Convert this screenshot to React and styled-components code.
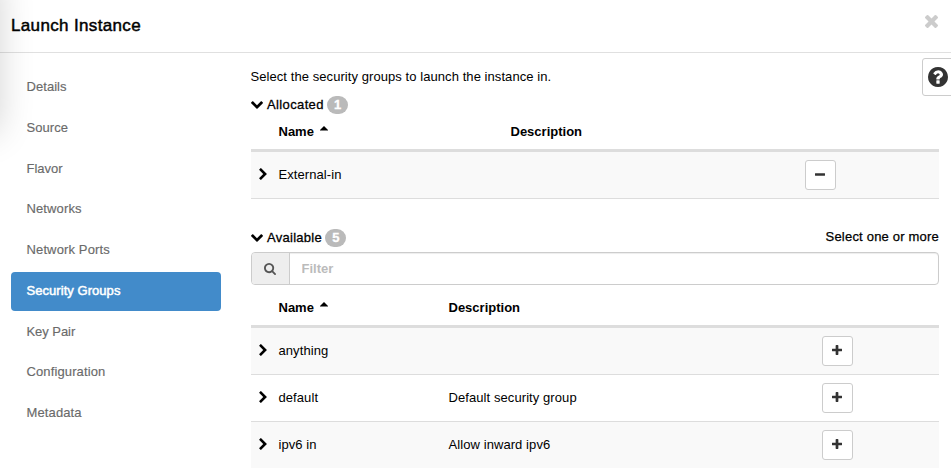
import React from "react";
import styled, { createGlobalStyle } from "styled-components";

const GlobalStyle = createGlobalStyle`
  * { box-sizing: border-box; }
  body {
    margin: 0;
    overflow: hidden;
    background: #fff;
    color: #000;
    font-family: "Liberation Sans", Arial, sans-serif;
    font-size: 13px;
    line-height: 18px;
  }
`;

const GLYPHS = {
  down: {
    box: "90 532 1612 1036",
    d: "M1683 808l-742 741q-19 19-45 19t-45-19l-742-741q-19-19-19-45.5t19-45.5l166-165q19-19 45-19t45 19l531 531 531-531q19-19 45-19t45 19l166 165q19 19 19 45.5t-19 45.5z",
  },
  right: {
    box: "346 26 1036 1612",
    d: "M1363 877l-742 742q-19 19-45 19t-45-19l-166-166q-19-19-19-45t19-45l531-531-531-531q-19-19-19-45t19-45l166-166q19-19 45-19t45 19l742 742q19 19 19 45t-19 45z",
  },
  caret: { box: "0 0 8 4.5", d: "M0 4.5L0 4 4 0l4 4v.5z" },
  times: {
    box: "302 366 1188 1188",
    d: "M1490 1322q0 40-28 68l-136 136q-28 28-68 28t-68-28l-294-294-294 294q-28 28-68 28t-68-28l-136-136q-28-28-28-68t28-68l294-294-294-294q-28-28-28-68t28-68l136-136q28-28 68-28t68 28l294 294 294-294q28-28 68-28t68 28l136 136q28 28 28 68t-28 68l-294 294 294 294q28 28 28 68z",
  },
  question: {
    box: "128 128 1536 1536",
    d: "M1024 1376v-192q0-14-9-23t-23-9h-192q-14 0-23 9t-9 23v192q0 14 9 23t23 9h192q14 0 23-9t9-23zm256-672q0-88-55.5-163t-138.5-116-170-41q-243 0-371 213-15 24 8 42l132 100q7 6 19 6 16 0 25-12 53-68 86-92 34-24 86-24 48 0 85.5 26t37.5 59q0 38-20 61t-68 45q-63 28-115.5 86.5t-52.5 125.5v36q0 14 9 23t23 9h192q14 0 23-9t9-23q0-19 21.5-49.5t54.5-49.5q32-18 49-28.5t46-35 44.5-48 28-60.5 12.5-81zm384 192q0 209-103 385.5t-279.5 279.5-385.5 103-385.5-103-279.5-279.5-103-385.5 103-385.5 279.5-279.5 385.5-103 385.5 103 279.5 279.5 103 385.5z",
  },
  search: {
    box: "64 128 1664 1664",
    d: "M1216 832q0-185-131.5-316.5t-316.5-131.5-316.5 131.5-131.5 316.5 131.5 316.5 316.5 131.5 316.5-131.5 131.5-316.5zm512 832q0 52-38 90t-90 38q-54 0-90-38l-343-342q-179 124-399 124-143 0-273.5-55.5t-225-150-150-225-55.5-273.5 55.5-273.5 150-225 225-150 273.5-55.5 273.5 55.5 225 150 150 225 55.5 273.5q0 220-124 399l343 343q37 37 37 90z",
  },
  minus: {
    box: "192 640 1408 384",
    d: "M1600 736v192q0 40-28 68t-68 28h-1216q-40 0-68-28t-28-68v-192q0-40 28-68t68-28h1216q40 0 68 28t28 68z",
  },
  plus: {
    box: "192 128 1408 1408",
    d: "M1600 736v192q0 40-28 68t-68 28h-416v416q0 40-28 68t-68 28h-192q-40 0-68-28t-28-68v-416h-416q-40 0-68-28t-28-68v-192q0-40 28-68t68-28h416v-416q0-40 28-68t68-28h192q40 0 68 28t28 68v416h416q40 0 68 28t28 68z",
  },
};

const Svg = styled.svg`
  display: block;
  flex: none;
  fill: currentColor;
`;

function Icon({ name, width, height = width }) {
  const glyph = GLYPHS[name];
  return (
    <Svg width={width} height={height} viewBox={glyph.box} aria-hidden="true">
      <path d={glyph.d} />
    </Svg>
  );
}

const Dialog = styled.div`
  position: relative;
  width: 951px;
  height: 468px;
  overflow: hidden;
`;

const EdgeShadow = styled.div`
  position: absolute;
  left: -60px;
  top: -20px;
  width: 54px;
  height: 150px;
  box-shadow: 2px 0 36px 2px rgba(0, 0, 0, 0.19);
  pointer-events: none;
`;

const Header = styled.header`
  display: flex;
  justify-content: space-between;
  height: 53px;
  padding: 15px 13px 0 11px;
  border-bottom: 1px solid #e0e0e0;
`;

const Title = styled.h1`
  margin: 1px 0 0;
  font-size: 17px;
  font-weight: 400;
  line-height: 20px;
  letter-spacing: 0.35px;
  -webkit-text-stroke: 0.45px #000;
`;

const CloseButton = styled.button`
  height: 13px;
  padding: 0;
  border: 0;
  background: none;
  color: #ccc;
`;

const Body = styled.div`
  display: flex;
  height: 415px;
`;

const Nav = styled.nav`
  display: flex;
  flex-direction: column;
  gap: 2px;
  width: 210px;
  margin: 15.25px 30px 0 11px;
`;

const NavItem = styled.a`
  flex: none;
  height: 38.75px;
  padding: 9.8px 15.5px 0;
  border-radius: 4px;
  letter-spacing: ${(p) => p.$track}px;
  color: ${(p) => (p.$active ? "#fff" : "#6a6a6a")};
  background: ${(p) => (p.$active ? "#428bca" : "transparent")};
  -webkit-text-stroke: ${(p) => (p.$active ? "0.5px #fff" : "0.15px #6a6a6a")};
`;

const Content = styled.main`
  width: 688px;
`;

const Intro = styled.p`
  margin: 15px 0 9px -0.5px;
  letter-spacing: 0.07px;
`;

const SectionBar = styled.div`
  display: flex;
  align-items: center;
  height: 20px;
  margin-top: ${(p) => p.$top || 0}px;
`;

const SectionTitle = styled.span`
  margin: 0 3.4px 0 4px;
  letter-spacing: ${(p) => p.$track}px;
  -webkit-text-stroke: 0.3px #000;
`;

const Count = styled.span`
  width: 21px;
  height: 18px;
  border-radius: 9px;
  background: #bababa;
  color: #fff;
  font-weight: 700;
  line-height: 18px;
  text-align: center;
  -webkit-text-stroke: 0.3px #fff;
`;

const Hint = styled.span`
  margin: -2px 0 0 auto;
  letter-spacing: 0.2px;
  -webkit-text-stroke: 0.25px #000;
`;

const FilterBox = styled.div`
  display: flex;
  height: 33px;
  margin-top: 4px;
  border: 1px solid #ccc;
  border-radius: 4px;
  overflow: hidden;
  box-shadow: inset 0 1px 1px rgba(0, 0, 0, 0.075);
`;

const FilterAddon = styled.span`
  display: flex;
  align-items: center;
  justify-content: center;
  width: 38px;
  padding-right: 1px;
  border-right: 1px solid #ccc;
  background: #eee;
  color: #555;
`;

const FilterInput = styled.input`
  flex: 1;
  padding: 0 11.5px 1px;
  border: 0;
  outline: 0;
  background: transparent;
  font: 700 13px "Liberation Sans", Arial, sans-serif;
  letter-spacing: 0;
  &::placeholder { color: #bbb; opacity: 1; }
`;

const TableGrid = styled.div`
  display: grid;
  grid-template-columns: ${(p) => p.$columns};
  align-items: center;
`;

const HeadRow = styled(TableGrid)`
  height: ${(p) => p.$height}px;
  padding-bottom: 8px;
  align-items: end;
  border-bottom: 3px solid #ddd;
  font-weight: 700;
`;

const HeadCell = styled.span`
  display: flex;
  gap: 5.7px;
  svg { margin-top: 3px; }
`;

const Row = styled(TableGrid)`
  height: 47px;
  border-bottom: 1px solid #ddd;
  background: ${(p) => (p.$shaded ? "#f9f9f9" : "#fff")};
`;

const Expander = styled.span`
  padding: 0 0 1.4px 8px;
`;

const Cell = styled.span`
  letter-spacing: 0.08px;
`;

const ActionButton = styled.button`
  display: flex;
  align-items: center;
  justify-content: center;
  width: 31px;
  height: 30px;
  padding: 0 1px 1.6px 0;
  border: 1px solid #ccc;
  border-radius: 3px;
  background: #fff;
  color: #333;
`;

const HelpButton = styled.button`
  position: absolute;
  left: 922px;
  top: 58px;
  width: 34px;
  height: 38px;
  padding: 0 0 0 5px;
  border: 1px solid #ccc;
  border-radius: 3px;
  background: #fff;
  color: #333;
`;

const STEPS = [
  { label: "Details", track: 0.05 },
  { label: "Source", track: 0.05 },
  { label: "Flavor", track: 0 },
  { label: "Networks", track: 0.12 },
  { label: "Network Ports", track: 0.13 },
  { label: "Security Groups", track: 0.05, active: true },
  { label: "Key Pair", track: -0.05 },
  { label: "Configuration", track: 0.12 },
  { label: "Metadata", track: 0.12 },
];

function GroupTable({ columns, headHeight, rows, action }) {
  return (
    <>
      <HeadRow $columns={columns} $height={headHeight}>
        <span />
        <HeadCell>
          Name
          <Icon name="caret" width={8} height={4.5} />
        </HeadCell>
        <HeadCell>Description</HeadCell>
      </HeadRow>
      {rows.map(([name, description], i) => (
        <Row key={name} $columns={columns} $shaded={i % 2 === 0}>
          <Expander>
            <Icon name="right" width={8} height={12} />
          </Expander>
          <Cell>{name}</Cell>
          <Cell>{description}</Cell>
          <ActionButton aria-label={action}>
            <Icon name={action} width={10} height={action === "minus" ? 3 : 10} />
          </ActionButton>
        </Row>
      ))}
    </>
  );
}

export default function App() {
  return (
    <>
      <GlobalStyle />
      <Dialog>
        <Header>
          <Title>Launch Instance</Title>
          <CloseButton aria-label="Close">
            <Icon name="times" width={13} />
          </CloseButton>
        </Header>
        <Body>
          <Nav>
            {STEPS.map(({ label, track, active }) => (
              <NavItem key={label} $track={track} $active={active}>
                {label}
              </NavItem>
            ))}
          </Nav>
          <Content>
            <Intro>Select the security groups to launch the instance in.</Intro>
            <SectionBar>
              <Icon name="down" width={12} height={8} />
              <SectionTitle $track={0.37}>Allocated</SectionTitle>
              <Count>1</Count>
            </SectionBar>
            <GroupTable
              columns="27.5px 232px 294.5px 31px"
              headHeight={37}
              rows={[["External-in", ""]]}
              action="minus"
            />
            <SectionBar $top={29}>
              <Icon name="down" width={12} height={8} />
              <SectionTitle $track={0.27}>Available</SectionTitle>
              <Count>5</Count>
              <Hint>Select one or more</Hint>
            </SectionBar>
            <FilterBox>
              <FilterAddon>
                <Icon name="search" width={12} />
              </FilterAddon>
              <FilterInput placeholder="Filter" />
            </FilterBox>
            <GroupTable
              columns="27.5px 170px 373.5px 31px"
              headHeight={43}
              rows={[
                ["anything", ""],
                ["default", "Default security group"],
                ["ipv6 in", "Allow inward ipv6"],
              ]}
              action="plus"
            />
          </Content>
        </Body>
        <HelpButton aria-label="Help">
          <Icon name="question" width={20} />
        </HelpButton>
        <EdgeShadow />
      </Dialog>
    </>
  );
}
